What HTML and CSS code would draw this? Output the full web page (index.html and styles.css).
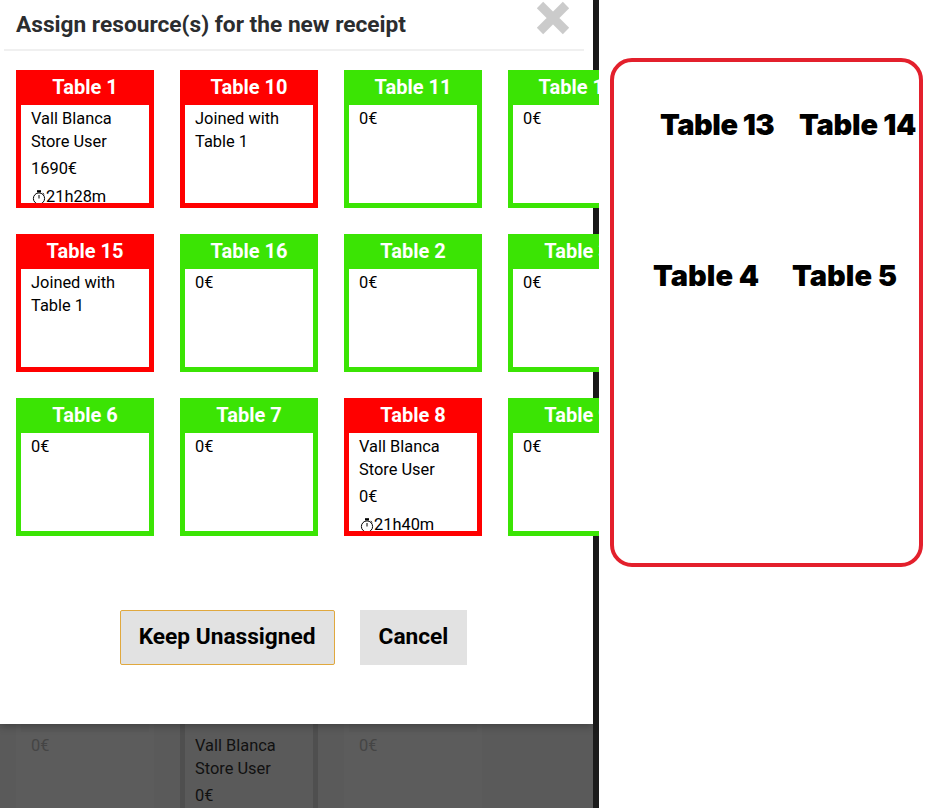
FILE: index.html
```html
<!DOCTYPE html>
<html lang="en">
<head>
<meta charset="utf-8">
<title>Assign resources</title>
<link rel="stylesheet" href="styles.css">
</head>
<body>
<svg class="defs" width="0" height="0" aria-hidden="true">
  <symbol id="watch" viewBox="0 0 14 15">
    <rect x="5" y="0.2" width="4" height="2.2" fill="#000"/>
    <circle cx="7" cy="8.5" r="5.6" fill="none" stroke="#000" stroke-width="1"/>
    <path d="M7 8.5V5M10.8 3.2l1.5 1.4" fill="none" stroke="#000" stroke-width="1"/>
  </symbol>
</svg>
<div class="app">
  <main class="stage">
    <div class="backdrop">
      <div class="grid">
        <div class="card back-light"><div class="head">Table 6</div><div class="body"><p class="amount muted">0€</p></div></div>
        <div class="card back-dark"><div class="head">Table 7</div><div class="body"><p class="name">Vall Blanca<br>Store User</p><p class="amount">0€</p></div></div>
        <div class="card back-light"><div class="head">Table 8</div><div class="body"><p class="amount muted">0€</p></div></div>
      </div>
    </div>
    <section class="modal">
      <header class="modal-head">
        <h1 class="title">Assign resource(s) for the new receipt</h1>
        <svg class="close" viewBox="0 0 36 36" aria-label="Close"><path d="M5 5L31 31M31 5L5 31" stroke="#cbcbcb" stroke-width="9" fill="none"/></svg>
      </header>
      <div class="grid">
        <div class="card red"><div class="head">Table 1</div><div class="body"><p class="name">Vall Blanca<br>Store User</p><p class="amount">1690€</p><p class="time"><svg class="watch"><use href="#watch"/></svg>21h28m</p></div></div>
        <div class="card red"><div class="head">Table 10</div><div class="body"><p class="name">Joined with<br>Table 1</p></div></div>
        <div class="card green"><div class="head">Table 11</div><div class="body"><p class="amount first">0€</p></div></div>
        <div class="card green"><div class="head">Table 12</div><div class="body"><p class="amount first">0€</p></div></div>
        <div class="card red"><div class="head">Table 15</div><div class="body"><p class="name">Joined with<br>Table 1</p></div></div>
        <div class="card green"><div class="head">Table 16</div><div class="body"><p class="amount first">0€</p></div></div>
        <div class="card green"><div class="head">Table 2</div><div class="body"><p class="amount first">0€</p></div></div>
        <div class="card green"><div class="head">Table 3</div><div class="body"><p class="amount first">0€</p></div></div>
        <div class="card green"><div class="head">Table 6</div><div class="body"><p class="amount first">0€</p></div></div>
        <div class="card green"><div class="head">Table 7</div><div class="body"><p class="amount first">0€</p></div></div>
        <div class="card red"><div class="head">Table 8</div><div class="body"><p class="name">Vall Blanca<br>Store User</p><p class="amount">0€</p><p class="time"><svg class="watch"><use href="#watch"/></svg>21h40m</p></div></div>
        <div class="card green"><div class="head">Table 9</div><div class="body"><p class="amount first">0€</p></div></div>
      </div>
      <div class="actions">
        <button class="btn btn-focus" type="button">Keep Unassigned</button>
        <button class="btn" type="button">Cancel</button>
      </div>
    </section>
  </main>
  <aside class="side">
    <div class="floor">
      <span class="label l13">Table 13</span>
      <span class="label l14">Table 14</span>
      <span class="label l4">Table 4</span>
      <span class="label l5">Table 5</span>
    </div>
  </aside>
</div>
</body>
</html>
```

FILE: styles.css
```css
* { box-sizing: border-box; }
html, body { margin: 0; height: 100%; background: #fff; overflow: hidden; }
body { font-family: Roboto, "Liberation Sans", sans-serif; color: #000; }
p { margin: 0; }
.defs { position: absolute; }

.app { display: flex; width: 934px; height: 808px; }

.stage {
  position: relative;
  flex: 0 0 599px;
  height: 808px;
  overflow: hidden;
  background: #1c1c1c;
}

.backdrop {
  width: 593px;
  height: 808px;
  padding: 697px 0 0 16px;
  background: #5a5a5a;
  overflow: hidden;
}

.modal {
  position: absolute;
  top: 0;
  left: 0;
  width: 593px;
  height: 724px;
  background: #fff;
  box-shadow: 0 2px 8px rgba(0, 0, 0, .3);
}

.modal-head {
  position: relative;
  height: 51px;
  margin: 0 9px 19px 4px;
  padding: 11px 0 0 12px;
  border-bottom: 2px solid #f0f0f0;
}

.title {
  margin: 0;
  font-size: 22.7px;
  line-height: 28px;
  font-weight: 700;
  color: #2b2d2f;
  white-space: nowrap;
}

.close {
  position: absolute;
  top: 0;
  left: 531px;
  width: 36px;
  height: 36px;
}

.grid {
  display: grid;
  grid-template-columns: repeat(4, 138px);
  grid-auto-rows: 138px;
  gap: 26px;
}

.modal > .grid { margin-left: 16px; }

.card {
  display: flex;
  flex-direction: column;
  border: 5px solid;
  overflow: hidden;
}

.red { border-color: #f00; }
.green { border-color: #3be404; }
.red .head { background: #f00; }
.green .head { background: #3be404; }

.head {
  flex: 0 0 35px;
  margin-top: -5px;
  height: 35px;
  color: #fff;
  font-size: 20px;
  font-weight: 700;
  line-height: 35px;
  text-align: center;
  white-space: nowrap;
}

.body {
  flex: 1;
  min-height: 0;
  padding: 3px 0 0 10px;
  background: #fff;
  font-size: 16.4px;
  overflow: hidden;
}

.name { line-height: 22.5px; }
.amount { margin-top: 5px; line-height: 22px; }
.amount.first { margin-top: 0; line-height: 22.5px; }
.time { display: flex; align-items: flex-end; margin-top: 6px; line-height: 22px; white-space: nowrap; }
.watch { flex: none; width: 14px; height: 15px; margin: 0 0 3px 1px; }

.back-light { border-color: #5c5c5c; }
.back-light .head, .back-dark .head { background: transparent; color: transparent; }
.back-light .body { background: #5c5c5c; }
.back-dark { border-color: #4f4f4f; }
.back-dark .body { background: #5a5a5a; color: #111; }
.muted { margin-top: 0; line-height: 22.5px; color: #454545; }

.actions {
  display: flex;
  justify-content: center;
  gap: 25px;
  margin: 74px 0 0;
  padding-right: 6px;
}

.btn {
  height: 55px;
  padding: 0 18px 2px;
  border: 1px solid #e2e2e2;
  border-radius: 0;
  background: #e2e2e2;
  color: #000;
  font-family: Roboto, "Liberation Sans", sans-serif;
  font-size: 22.7px;
  font-weight: 700;
}

.btn-focus {
  border-color: #e0a83e;
  border-radius: 2px;
}

.side {
  flex: 1;
  padding: 58px 0 0 11px;
}

.floor {
  position: relative;
  width: 313px;
  height: 509px;
  border: 4px solid #e3202c;
  border-radius: 22px;
}

.label {
  position: absolute;
  font-family: Inter, "Liberation Sans", sans-serif;
  font-size: 29px;
  font-weight: 900;
  line-height: 36px;
  white-space: nowrap;
  color: #000;
}

.l13 { left: 46px; top: 45px; letter-spacing: -0.5px; }
.l14 { left: 185px; top: 45px; letter-spacing: -0.25px; }
.l4 { left: 39px; top: 196px; }
.l5 { left: 178px; top: 196px; }
```
